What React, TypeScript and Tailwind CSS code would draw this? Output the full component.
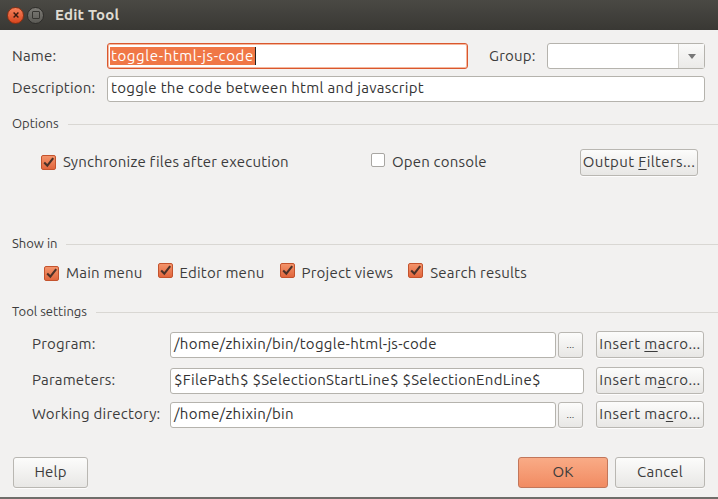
import React from 'react'

const font = "font-['Ubuntu','Noto_Sans','Liberation_Sans',sans-serif]"
const txt = 'text-[15px] tracking-[0.2px] text-[#3c3c3c]'

function Check({ on }: { on: boolean }) {
  if (!on)
    return (
      <span className="inline-block h-[14px] w-[14px] shrink-0 rounded-[2px] border border-[#a8a6a2] bg-white" />
    )
  return (
    <span className="relative inline-block h-[15px] w-[15px] shrink-0 rounded-[2px] border border-[#c4532d] bg-gradient-to-b from-[#f3936a] to-[#e1663d]">
      <svg viewBox="0 0 15 15" className="absolute left-[-1px] top-[-1px] h-[15px] w-[15px]">
        <path d="M3.2 7.6 L6.3 10.6 L12.2 3.2" fill="none" stroke="#4a3128" strokeWidth="2.1" />
      </svg>
    </span>
  )
}

function Section({ title }: { title: string }) {
  return (
    <div className="flex h-[18px] items-center gap-[9px] pl-[12px]">
      <span className="text-[13px] text-[#3c3c3c]">{title}</span>
      <div className="h-px flex-1 bg-[#d9d7d3]" />
    </div>
  )
}

function Btn({ children, className = '' }: { children: React.ReactNode; className?: string }) {
  return (
    <div
      className={`flex items-center justify-center rounded-[3px] border border-[#b9b7b2] bg-gradient-to-b from-[#fcfcfb] to-[#e8e7e5] text-[#3c3c3c] shadow-[0_1px_0_rgba(255,255,255,0.8)] ${className}`}
    >
      {children}
    </div>
  )
}

function Field({ value, className = '' }: { value: string; className?: string }) {
  return (
    <div
      className={`flex h-[26px] items-center rounded-[3px] border border-[#b5b3ad] bg-white pl-[3px] text-[15px] tracking-[0.3px] text-[#333] ${className}`}
    >
      {value}
    </div>
  )
}

export default function App() {
  return (
    <div className={`flex h-[499px] w-[718px] flex-col overflow-hidden bg-[#f2f1f0] ${font}`}>
      {/* title bar */}
      <div className="flex h-[30px] items-center bg-gradient-to-b from-[#4a4944] to-[#393834] pl-[7px]">
        <span className="flex h-[17px] w-[17px] items-center justify-center rounded-full border border-[#8c2f12] bg-gradient-to-b from-[#f6805a] to-[#d8451c]">
          <svg viewBox="0 0 10 10" className="h-[8px] w-[8px]">
            <path d="M2 2 L8 8 M8 2 L2 8" stroke="#3a1a10" strokeWidth="1.8" />
          </svg>
        </span>
        <span className="ml-[3px] flex h-[17px] w-[17px] items-center justify-center rounded-full border border-[#2e2d2a] bg-gradient-to-b from-[#7c7b76] to-[#5b5a55]">
          <span className="h-[8px] w-[8px] rounded-[1px] border-[1.5px] border-[#363531]" />
        </span>
        <span className="ml-[11px] text-[15px] font-bold tracking-[0.2px] text-[#dfdbd2]">Edit Tool</span>
      </div>

      {/* name / group */}
      <div className={`mt-[13px] flex h-[26px] items-center pl-[12px] ${txt}`}>
        <span className="w-[95px]">Name:</span>
        <div className="flex h-[26px] w-[361px] items-center rounded-[3px] border border-[#d9572e] bg-white pl-[2px] shadow-[inset_0_0_0_1px_#f6b79c]">
          <span className="bg-[#f07746] px-px leading-[18px] tracking-[0.6px] text-white">toggle-html-js-code</span>
          <span className="h-[18px] w-px bg-[#222]" />
        </div>
        <span className="ml-[21px] w-[58px]">Group:</span>
        <div className="flex h-[26px] w-[158px] rounded-[3px] border border-[#b5b3ad] bg-white">
          <div className="flex-1" />
          <div className="flex w-[26px] items-center justify-center border-l border-[#d0cec9] bg-gradient-to-b from-[#fafaf9] to-[#ebeae8]">
            <svg viewBox="0 0 8 5" className="h-[5px] w-[8px]">
              <path d="M0 0 H8 L4 5 Z" fill="#777" />
            </svg>
          </div>
        </div>
      </div>

      {/* description */}
      <div className={`mt-[7px] flex h-[25px] items-center pl-[12px] ${txt}`}>
        <span className="w-[95px]">Description:</span>
        <Field value="toggle the code between html and javascript" className="h-[25px] w-[598px]" />
      </div>

      <div className="mt-[14px]">
        <Section title="Options" />
      </div>

      <div className={`mt-[16px] flex h-[27px] items-center pl-[41px] ${txt}`}>
        <Check on />
        <span className="ml-[7px]">Synchronize files after execution</span>
        <span className="ml-[82px]">
          <Check on={false} />
        </span>
        <span className="ml-[7px]">Open console</span>
        <Btn className="ml-auto mr-[20px] h-[27px] w-[118px] tracking-[0.4px]">
          <span>
            Output <span className="underline underline-offset-2">F</span>ilters...
          </span>
        </Btn>
      </div>

      <div className="mt-[59px]">
        <Section title="Show in" />
      </div>

      <div className={`mt-[10px] flex h-[20px] items-center pl-[44px] ${txt}`}>
        <Check on />
        <span className="ml-[7px]">Main menu</span>
        <span className="ml-[15px]">
          <Check on />
        </span>
        <span className="ml-[7px]">Editor menu</span>
        <span className="ml-[15px]">
          <Check on />
        </span>
        <span className="ml-[7px]">Project views</span>
        <span className="ml-[15px]">
          <Check on />
        </span>
        <span className="ml-[7px]">Search results</span>
      </div>

      <div className="mt-[20px]">
        <Section title="Tool settings" />
      </div>

      {/* tool settings rows */}
      <div className={`mt-[10px] flex h-[27px] items-center pl-[32px] ${txt}`}>
        <span className="w-[138px]">Program:</span>
        <Field value="/home/zhixin/bin/toggle-html-js-code" className="w-[386px]" />
        <Btn className="ml-[2px] h-[26px] w-[25px] text-[10px]">...</Btn>
        <Btn className="ml-[13px] h-[27px] w-[108px] tracking-[0.4px]">
          <span>
            Insert <span className="underline underline-offset-2">m</span>acro...
          </span>
        </Btn>
      </div>

      <div className={`mt-[9px] flex h-[27px] items-center pl-[32px] ${txt}`}>
        <span className="w-[138px]">Parameters:</span>
        <Field value="$FilePath$ $SelectionStartLine$ $SelectionEndLine$" className="w-[414px]" />
        <Btn className="ml-[12px] h-[27px] w-[108px] tracking-[0.4px]">
          <span>
            Insert m<span className="underline underline-offset-2">a</span>cro...
          </span>
        </Btn>
      </div>

      <div className={`mt-[7px] flex h-[27px] items-center pl-[32px] ${txt}`}>
        <span className="w-[138px]">Working directory:</span>
        <Field value="/home/zhixin/bin" className="w-[386px]" />
        <Btn className="ml-[2px] h-[26px] w-[25px] text-[10px]">...</Btn>
        <Btn className="ml-[13px] h-[27px] w-[108px] tracking-[0.4px]">
          <span>
            Insert ma<span className="underline underline-offset-2">c</span>ro...
          </span>
        </Btn>
      </div>

      {/* bottom buttons */}
      <div className={`mt-[29px] flex h-[31px] items-center pl-[13px] pr-[13px] ${txt}`}>
        <Btn className="h-[31px] w-[75px]">Help</Btn>
        <div className="ml-auto flex h-[31px] w-[90px] items-center justify-center rounded-[3px] border border-[#c2765a] bg-gradient-to-b from-[#f9ab86] to-[#f18b62] text-[#3c3c3c]">
          OK
        </div>
        <Btn className="ml-[7px] h-[31px] w-[90px]">Cancel</Btn>
      </div>

      <div className="mt-auto h-[2px] bg-[#6f6e6a]" />
    </div>
  )
}
